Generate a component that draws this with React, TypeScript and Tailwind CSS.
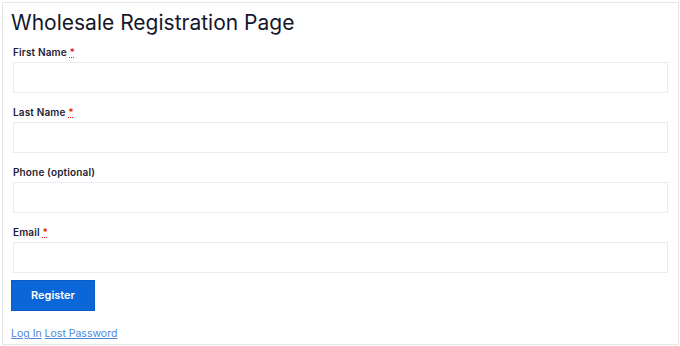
export default function App() {
  const fields = [
    { label: "First Name", required: true },
    { label: "Last Name", required: true },
    { label: "Phone (optional)", required: false },
    { label: "Email", required: true },
  ];

  return (
    <div className="h-[346px] w-[680px] bg-white pl-[2px] pt-[2px] font-['Inter',sans-serif]">
      <div className="h-[343px] w-[677px] border border-[#e6e6e6] px-[8px]">
        <h1 className="pt-[6px] text-[21px] leading-[28px] font-normal text-[#15172b]">
          Wholesale Registration Page
        </h1>
        <form className="mt-[7px] px-[2px]">
          {fields.map((f) => (
            <div key={f.label} className="mb-[11px]">
              <label className="block text-[10px] leading-[16px] font-semibold tracking-[0.15px] text-[#1e2235]">
                {f.label}
                {f.required && (
                  <>
                    {" "}
                    <abbr
                      title="required"
                      className="text-[#e11d1d] underline decoration-dotted"
                    >
                      *
                    </abbr>
                  </>
                )}
              </label>
              <input
                type="text"
                className="mt-[2px] block h-[31px] w-[655px] border border-[#e7ebf3] bg-white px-2 text-sm outline-none"
              />
            </div>
          ))}
          <button
            type="button"
            className="-ml-[2px] -mt-[4px] block h-[31px] w-[84px] border border-[#0a5cc4] bg-[#0b66d8] text-[11px] font-semibold text-white"
          >
            Register
          </button>
          <div className="-ml-[2px] mt-[15px] text-[10.5px] leading-[16px] text-[#4f86d8]">
            <a href="#" className="underline">Log In</a>{" "}
            <a href="#" className="underline">Lost Password</a>
          </div>
        </form>
      </div>
    </div>
  );
}
